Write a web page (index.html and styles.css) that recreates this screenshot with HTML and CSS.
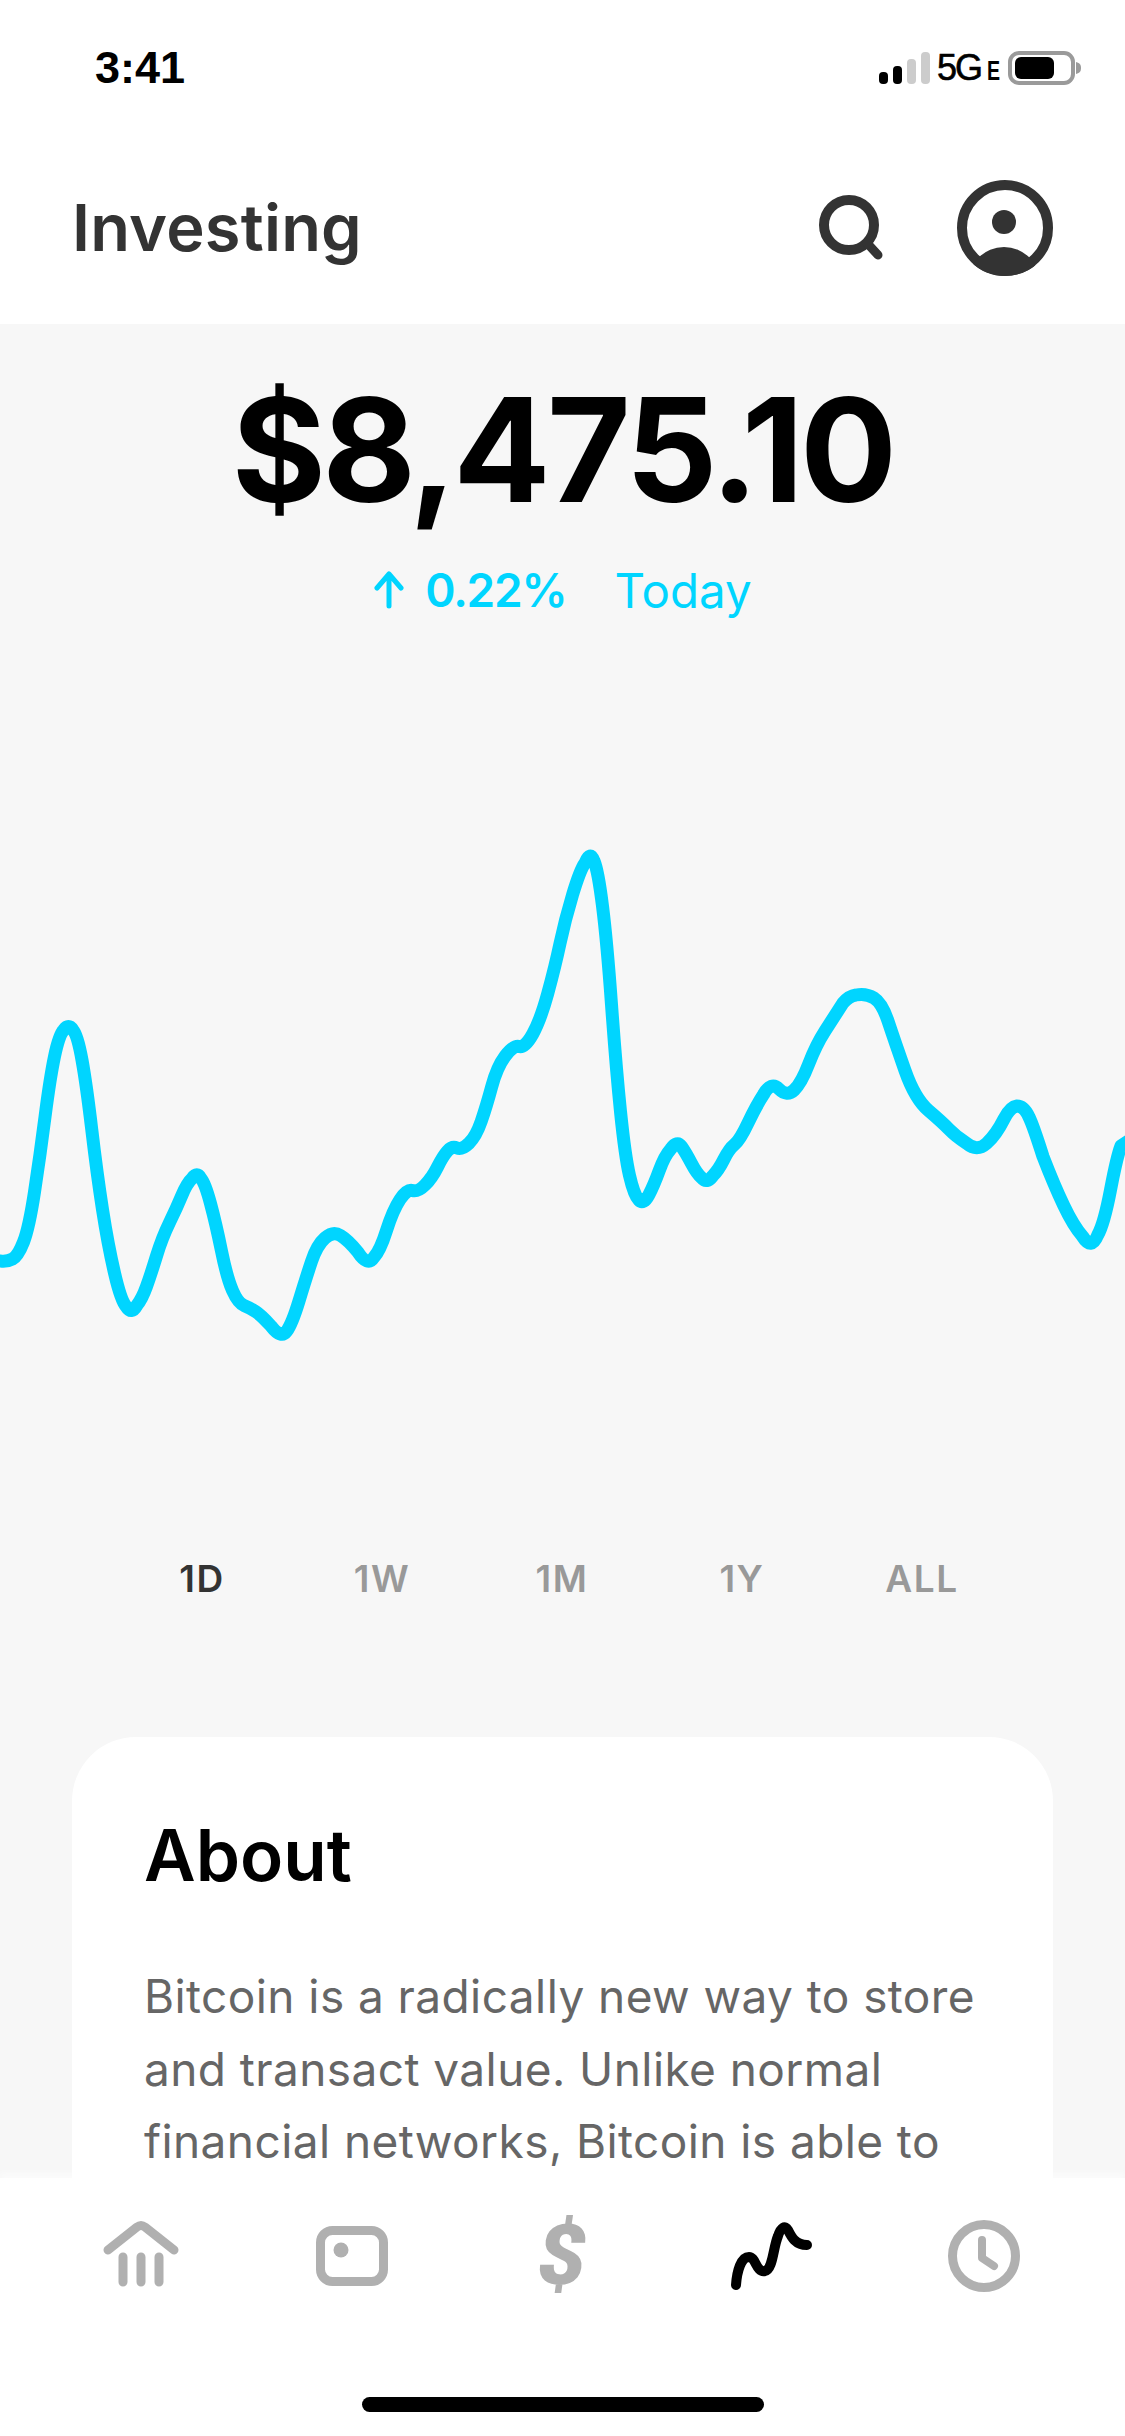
FILE: index.html
```html
<!DOCTYPE html>
<html lang="en">
<head>
<meta charset="utf-8">
<title>Investing</title>
<link rel="stylesheet" href="styles.css">
</head>
<body>
<div class="app">
  <div class="status">
    <span class="time">3:41</span>
    <div class="status-right">
      <div class="signal"><i class="b1"></i><i class="b2"></i><i class="b3"></i><i class="b4"></i></div>
      <span class="net">5G</span>
      <span class="net-e">E</span>
      <svg class="battery" viewBox="0 0 74 34" width="74" height="34">
        <rect x="2" y="2" width="63" height="30" rx="9" fill="none" stroke="#9a9a9a" stroke-width="4"/>
        <rect x="7" y="6" width="39" height="22" rx="6" fill="#000"/>
        <path d="M68 11c4 1 5 3 5 6s-1 5-5 6z" fill="#9a9a9a"/>
      </svg>
    </div>
  </div>
  <header class="header">
    <h1 class="title">Investing</h1>
    <div class="header-icons">
      <svg viewBox="0 0 66 66" width="66" height="66" fill="none" stroke="#333" stroke-linecap="round">
        <circle cx="30" cy="30" r="25" stroke-width="10"/>
        <path d="M48 48L59 60" stroke-width="9"/>
      </svg>
      <svg viewBox="0 0 96 96" width="96" height="96">
        <defs><clipPath id="avatar"><circle cx="48" cy="48" r="48"/></clipPath></defs>
        <circle cx="48" cy="48" r="43" fill="none" stroke="#333" stroke-width="10"/>
        <circle cx="47" cy="42" r="12" fill="#333"/>
        <circle cx="47" cy="103" r="36" fill="#333" clip-path="url(#avatar)"/>
      </svg>
    </div>
  </header>
  <main class="main">
    <section class="summary">
      <div class="price">$8,475.10</div>
      <div class="change">
        <svg viewBox="0 0 32 38" width="32" height="38" fill="none" stroke="#00d5ff" stroke-width="5" stroke-linecap="round" stroke-linejoin="round">
          <path d="M16 35V4M4 17L16 3L28 17"/>
        </svg>
        <span class="pct">0.22%</span>
        <span class="period">Today</span>
      </div>
    </section>
    <svg class="chart" viewBox="0 650 1125 850" width="1125" height="850" fill="none">
      <path stroke="#00d5ff" stroke-width="13" stroke-linecap="round" stroke-linejoin="round" d="M-5 1262L0 1262Q7 1263 12.5 1260Q18 1257 23.5 1243Q29 1229 34.5 1193Q40 1157 45 1118Q50 1079 54.5 1057.5Q59 1036 63.75 1031Q68.5 1024 73 1031Q77.5 1036 82 1061Q86.5 1086 91.75 1130.5Q97 1175 102.5 1210.5Q108 1246 114.5 1274Q121 1302 126.25 1307.5Q131.5 1316 136.75 1306.5Q142 1300 146.5 1287.5Q151 1275 156.5 1257Q162 1239 169.3 1224Q176.6 1209 181.8 1196.5Q187 1184 192 1179.5Q197 1172 201 1179.5Q205 1184 210.5 1204.5Q216 1225 221.5 1252Q227 1279 232.5 1291.5Q238 1304 244 1306.5Q250 1309 255.5 1312.5Q261 1316 271 1327Q281 1340 286.5 1332.5Q292 1325 299 1302Q306 1279 311.5 1262.5Q317 1246 325 1239Q333 1232 340.5 1236.5Q348 1241 357.8 1253Q367.6 1268 373.8 1258.5Q380 1252 386.5 1231.5Q393 1211 400 1200.5Q407 1190 412.5 1191.5Q418 1193 425 1186Q432 1179 437.5 1168Q443 1157 447.5 1152Q452 1147 457 1149Q462 1151 469 1144.25Q476 1137.5 481.25 1122.25Q486.5 1107 491.75 1087.5Q497 1068 505.25 1057Q513.5 1046 519.25 1047.5Q525 1049 532.75 1035Q540.5 1021 547.75 994.5Q555 968 560 944.5Q565 921 572.5 896Q580 871 585 864Q590 851 594 862Q598 871 602.5 907Q607 943 611.5 1005.5Q616 1068 620.5 1112.5Q625 1157 629.5 1176.5Q634 1196 638.8 1201Q643.6 1206 648.8 1196Q654 1186 659.25 1171.5Q664.5 1157 670.75 1150Q677 1141 681.5 1147.5Q686 1154 691.5 1164.5Q697 1175 701.85 1179Q706.7 1185 712.65 1177Q718.6 1171 723.8 1160.5Q729 1150 734.5 1145.5Q740 1141 748 1124Q756 1107 763.5 1095.5Q771 1082 779 1090Q787 1098 794.2 1091Q801.4 1084 808.7 1065Q816 1046 825 1032Q836 1015 843 1004Q849 997 856 996Q866 994 874 999Q882 1004 888 1022Q895 1043 905 1071.5Q915 1100 928.5 1111.5Q942 1123 949 1130.25Q956 1137.5 966.5 1144.25Q977 1153 986.5 1144.5Q996 1136 1004 1120Q1010 1108 1017 1107Q1024 1107 1029 1118Q1033 1126 1043 1157.5Q1054 1186 1063.75 1206.5Q1073.5 1227 1082.5 1237.25Q1091.5 1252 1097.75 1236Q1104 1225 1110.5 1191Q1117 1157 1121 1147L1130 1141"/>
    </svg>
    <nav class="ranges">
      <span class="range active">1D</span>
      <span class="range">1W</span>
      <span class="range">1M</span>
      <span class="range">1Y</span>
      <span class="range">ALL</span>
    </nav>
    <article class="card">
      <h2 class="card-title">About</h2>
      <p class="card-text">Bitcoin is a radically new way to store and transact value. Unlike normal financial networks, Bitcoin is able to</p>
    </article>
  </main>
  <footer class="tabbar">
    <div class="tabs">
      <div class="tab">
        <svg viewBox="0 0 100 80" width="100" height="80" fill="none" stroke="#b0b0b0" stroke-linecap="round" stroke-linejoin="round">
          <path d="M17 34L46 11Q50 8 54 11L83 34" stroke-width="9"/>
          <path d="M32 41V66M50 41V66M68 41V66" stroke-width="9"/>
        </svg>
      </div>
      <div class="tab">
        <svg viewBox="0 0 100 80" width="100" height="80" fill="none" stroke="#b0b0b0">
          <rect x="18.5" y="14.500" width="63" height="51" rx="12" stroke-width="9"/>
          <circle cx="39" cy="34" r="7.500" fill="#b0b0b0" stroke="none"/>
        </svg>
      </div>
      <div class="tab"><span class="dollar">$</span></div>
      <div class="tab">
        <svg viewBox="0 0 100 80" width="100" height="80" fill="none" stroke="#000" stroke-width="10" stroke-linecap="round" stroke-linejoin="round">
          <path d="M13 69C14 55 18 41 26 41C33 41 33 57 42 55C50 53 50 32 55 20C58 11 62 9 65 14C68 20 72 29 84 29"/>
        </svg>
      </div>
      <div class="tab">
        <svg viewBox="0 0 100 80" width="100" height="80" fill="none" stroke="#b0b0b0" stroke-linecap="round" stroke-linejoin="round">
          <circle cx="50" cy="40" r="31.500" stroke-width="9"/>
          <path d="M48 24V42L60 50" stroke-width="8"/>
        </svg>
      </div>
    </div>
    <div class="home-indicator"></div>
  </footer>
</div>
</body>
</html>
```
FILE: styles.css
```css
* { box-sizing: border-box; }
html, body { margin: 0; padding: 0; }
body { width: 1125px; height: 2436px; overflow: hidden; background: #fff; font-family: "Inter", "Liberation Sans", sans-serif; }
.app { display: flex; flex-direction: column; width: 1125px; height: 2436px; }

.status { display: flex; justify-content: space-between; align-items: center; height: 100px; padding: 50px 43px 14px 95px; flex: none; }
.time { font-family: "Liberation Sans", sans-serif; font-weight: 700; font-size: 45px; color: #000; line-height: 50px; }
.status-right { display: flex; align-items: center; }
.signal { display: flex; align-items: flex-end; gap: 5px; height: 32px; }
.signal i { display: block; width: 9px; border-radius: 4px; background: #000; }
.signal .b1 { height: 12px; }
.signal .b2 { height: 18px; }
.signal .b3 { height: 25px; background: #ccc; }
.signal .b4 { height: 32px; background: #ccc; }
.net { font-family: "Liberation Sans", sans-serif; font-size: 36px; font-weight: 400; letter-spacing: -2px; margin-left: 7px; color: #000; line-height: 40px; -webkit-text-stroke: .6px #000; }
.net-e { font-family: "Liberation Sans", sans-serif; font-size: 28px; font-weight: 700; margin-left: 6px; color: #000; line-height: 34px; padding-top: 6px; transform: scaleX(.7); transform-origin: left; width: 13px; }
.battery { margin-left: 8px; display: block; }

.header { display: flex; justify-content: space-between; align-items: center; height: 224px; padding: 32px 72px 0 72px; flex: none; background: #fff; }
.title { margin: 0; font-size: 65px; font-weight: 600; color: #333; line-height: 80px; letter-spacing: .2px; }
.header-icons { display: flex; align-items: center; gap: 72px; }
.header-icons svg { display: block; }

.main { flex: 1; min-height: 0; overflow: hidden; background: #f7f7f7; display: flex; flex-direction: column; }
.summary { display: flex; flex-direction: column; align-items: center; flex: none; }
.price { margin-top: 41px; font-size: 144px; font-weight: 650; line-height: 170px; color: #000; letter-spacing: -3.800px; }
.change { display: flex; align-items: center; margin-top: 25px; height: 60px; color: #00d5ff; }
.pct { font-weight: 600; font-size: 46px; margin-left: 20px; letter-spacing: -1.200px; }
.period { font-weight: 400; font-size: 47.500px; margin-left: 48px; }

.chart { display: block; flex: none; margin-top: 29px; }

.ranges { display: grid; grid-template-columns: repeat(5, 180px); padding: 0 0 0 112px; margin-top: 55px; flex: none; }
.range { text-align: center; font-size: 37px; font-weight: 600; color: #999; line-height: 50px; letter-spacing: 1.500px; }
.range.active { color: #333; }

.card { flex: none; margin: 133px 72px 0; padding: 76px 72px 0 72px; background: #fff; border-radius: 64px 64px 0 0; height: 700px; }
.card-title { margin: 0; font-size: 71px; line-height: 84px; font-weight: 600; color: #000; }
.card-text { margin: 63px 0 0; font-size: 46px; line-height: 72.500px; color: #666; letter-spacing: .42px; }

.tabbar { flex: none; height: 258px; background: #fff; display: flex; flex-direction: column; align-items: center; position: relative; box-shadow: 0 -6px 6px rgba(255, 255, 255, .5); }
.tabs { display: flex; width: 100%; padding: 38px 36px 0; }
.tab { flex: 1; display: flex; justify-content: center; height: 80px; }
.tab svg { display: block; }
.dollar { font-size: 84px; font-weight: 900; line-height: 80px; color: #b0b0b0; transform: skewX(-8deg); font-family: "Roboto", sans-serif; }
.home-indicator { width: 402px; height: 15px; border-radius: 8px; background: #000; margin-top: 101px; }
```
